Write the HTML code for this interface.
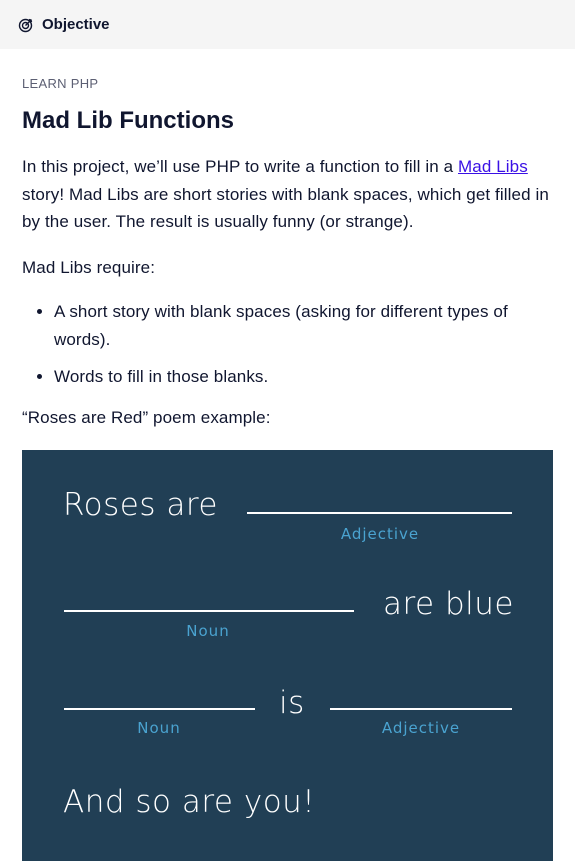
<!DOCTYPE html>
<html><head><style>
body{margin:0;width:575px;height:861px;overflow:hidden;background:#fff;font-family:"Liberation Sans",sans-serif;color:#10162f}
.top{height:49px;background:#f5f5f5;display:flex;align-items:center;padding-left:18px;font-weight:bold;font-size:15px}
.top svg{margin-right:8px}
.c{padding:0 22px}
.kick{margin-top:27px;font-size:13px;color:#5c5f73;letter-spacing:.3px}
h1{font-size:24px;margin:16px 0 0;line-height:28px}
p{font-size:17px;letter-spacing:.1px;line-height:27.5px;margin:18px 0 0}
a{color:#3a10e5}
ul{margin:17px 0 0;padding-left:32px;font-size:17px;letter-spacing:.1px;line-height:27.5px}
li{margin-bottom:10px;padding-left:0}
.img{position:absolute;left:22px;top:450px;width:531px;height:411px;background:#213f55;font-family:"DejaVu Sans",sans-serif;color:#fff}
.img .t{position:absolute;font-size:31px;letter-spacing:.5px;line-height:1;font-weight:300}
.img .l{position:absolute;height:2px;background:#fff}
.img .s{position:absolute;font-size:15px;color:#4aa3d0;letter-spacing:1px;transform:translateX(-50%)}
</style></head><body>
<div class="top"><svg width="16" height="16" viewBox="0 0 16 16" fill="none" stroke="#10162f" stroke-width="1.4"><circle cx="7.5" cy="8.5" r="6"/><circle cx="7.5" cy="8.5" r="3"/><path d="M7.5 8.5L13 3M11 2.5l2 .5.5 2"/></svg>Objective</div>
<div class="c">
<div class="kick">LEARN PHP</div>
<h1>Mad Lib Functions</h1>
<p style="margin-top:18px">In this project, we’ll use PHP to write a function to fill in a <a href="#">Mad Libs</a> story! Mad Libs are short stories with blank spaces, which get filled in by the user. The result is usually funny (or strange).</p>
<p>Mad Libs require:</p>
<ul><li>A short story with blank spaces (asking for different types of words).</li><li>Words to fill in those blanks.</li></ul>
<p style="margin-top:13px">“Roses are Red” poem example:</p>
</div>
<div class="img">
<div class="t" style="left:41px;top:40px">Roses are</div>
<div class="l" style="left:225px;width:265px;top:62px"></div>
<div class="s" style="left:358px;top:75px">Adjective</div>
<div class="l" style="left:42px;width:290px;top:160px"></div>
<div class="t" style="left:361px;top:139px">are blue</div>
<div class="s" style="left:186px;top:172px">Noun</div>
<div class="l" style="left:42px;width:191px;top:258px"></div>
<div class="t" style="left:257px;top:238px">is</div>
<div class="l" style="left:308px;width:182px;top:258px"></div>
<div class="s" style="left:137px;top:269px">Noun</div>
<div class="s" style="left:399px;top:269px">Adjective</div>
<div class="t" style="left:41px;top:337px">And so are you!</div>
</div>
</body></html>
